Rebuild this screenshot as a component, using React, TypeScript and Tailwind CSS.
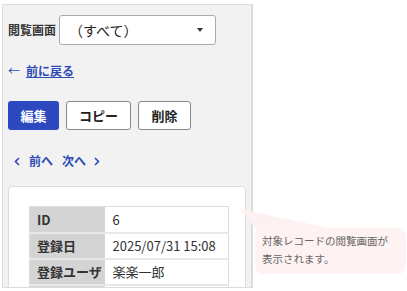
import React from "react";

const font = { fontFamily: '"Noto Sans CJK JP", "Noto Sans", sans-serif' };

export default function App() {
  const rows = [
    ["ID", "6"],
    ["登録日", "2025/07/31 15:08"],
    ["登録ユーザ", "楽楽一郎"],
    ["", ""],
  ];

  return (
    <div className="relative w-[407px] h-[291px] bg-white overflow-hidden" style={font}>
      <div className="ml-[2px] mt-[4px] w-[251px] h-[284px] bg-[#f2f2f2] border border-[#dcdcdc] border-r-2 overflow-hidden px-[5px] pt-[10px]">
        <div className="flex items-center gap-[3px]">
          <span className="text-[12px] font-bold text-[#333]">閲覧画面</span>
          <div className="w-[157px] h-[30px] bg-white border border-[#aaa] rounded-[3px] flex items-center justify-between pl-[9px] pr-[12px]">
            <span className="text-[14px] text-[#222]">（すべて）</span>
            <span className="w-0 h-0 border-l-[3px] border-r-[3px] border-t-[4px] border-l-transparent border-r-transparent border-t-[#333]" />
          </div>
        </div>

        <div className="mt-[17px] flex items-center gap-[6px] text-[12px] text-[#2d4bb3]">
          <span>←</span>
          <a className="underline font-bold">前に戻る</a>
        </div>

        <div className="mt-[21px] flex gap-[7px]">
          <button className="h-[29px] w-[51px] rounded-[3px] bg-[#2c49bf] text-white text-[13px] font-bold">編集</button>
          <button className="h-[29px] w-[65px] rounded-[3px] bg-white border border-[#888] text-[#222] text-[13px] font-bold">コピー</button>
          <button className="h-[29px] w-[53px] rounded-[3px] bg-white border border-[#888] text-[#222] text-[13px] font-bold">削除</button>
        </div>

        <div className="mt-[22px] flex items-center gap-[9px] pl-[6px] text-[12px] font-bold text-[#2d4bb3]">
          <span className="flex items-center gap-[9px]">
            <svg width="6" height="9" viewBox="0 0 6 9"><path d="M5 1L1.5 4.5L5 8" fill="none" stroke="#2d4bb3" strokeWidth="1.6" /></svg>
            前へ
          </span>
          <span className="flex items-center gap-[8px]">
            次へ
            <svg width="6" height="9" viewBox="0 0 6 9"><path d="M1 1L4.5 4.5L1 8" fill="none" stroke="#2d4bb3" strokeWidth="1.6" /></svg>
          </span>
        </div>

        <div className="mt-[16px] h-[120px] bg-white border border-[#ddd] rounded-[4px] pt-[19px] pl-[20px]">
          <table className="border-collapse border border-[#ddd] text-[13px]">
            <tbody>
              {rows.map(([k, v], i) => (
                <tr key={i} className="h-[26px]">
                  <td className="w-[75px] bg-[#d4d4d4] border-b-2 border-[#e8e8e8] pl-[7px] font-bold text-[#333]">{k}</td>
                  <td className="w-[124px] bg-white border-b-2 border-[#e8e8e8] pl-[8px] text-[#333]">{v}</td>
                </tr>
              ))}
            </tbody>
          </table>
        </div>
      </div>

      <svg className="absolute left-[238px] top-[206px]" width="110" height="32" viewBox="0 0 110 32">
        <polygon points="2,3 100,24 22,28" fill="#fef1f1" />
      </svg>
      <div className="absolute left-[255px] top-[228px] w-[151px] h-[46px] rounded-[8px] bg-[#fef2f2] pl-[7px] pt-[4px] text-[10.5px] leading-[18px] text-[#666]">
        <div>対象レコードの閲覧画面が</div>
        <div>表示されます。</div>
      </div>
    </div>
  );
}
